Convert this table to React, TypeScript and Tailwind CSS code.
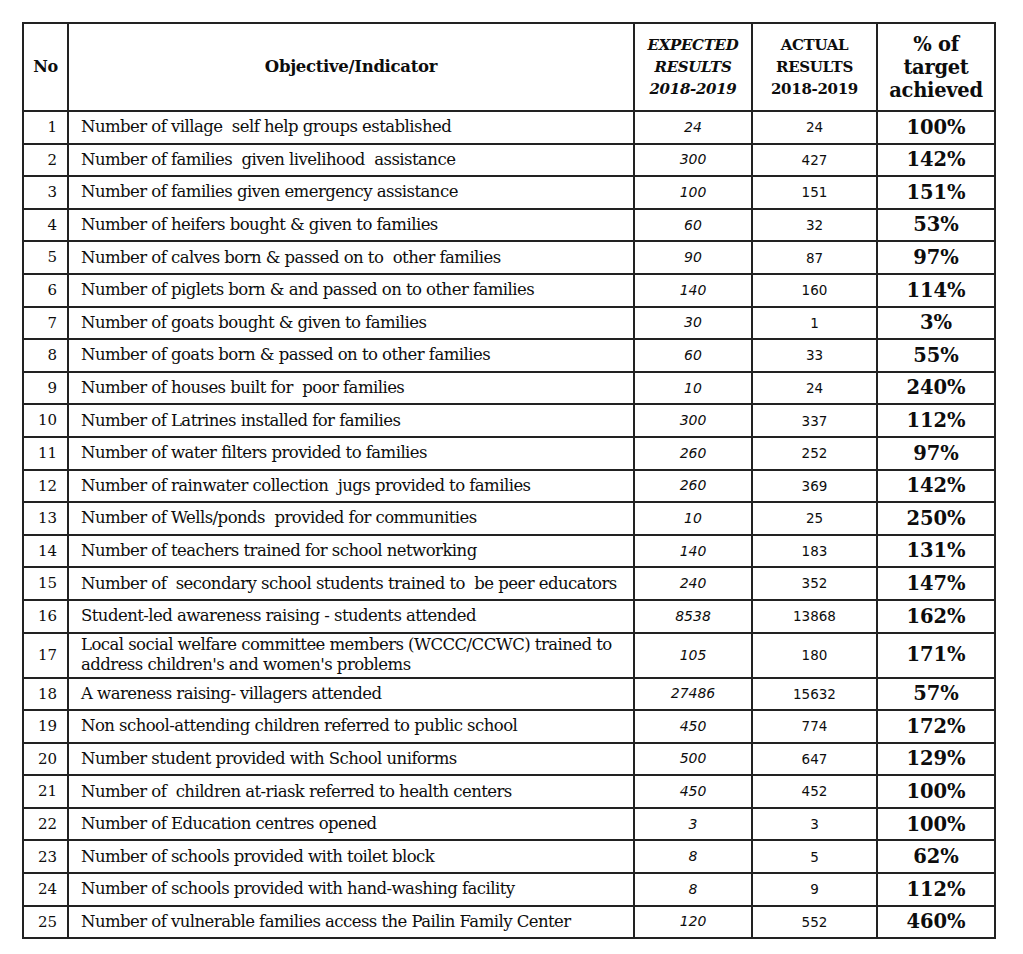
const rows: [number, string, string, string, string][] = [
  [1, 'Number of village  self help groups established', '24', '24', '100%'],
  [2, 'Number of families  given livelihood  assistance', '300', '427', '142%'],
  [3, 'Number of families given emergency assistance', '100', '151', '151%'],
  [4, 'Number of heifers bought & given to families', '60', '32', '53%'],
  [5, 'Number of calves born & passed on to  other families', '90', '87', '97%'],
  [6, 'Number of piglets born & and passed on to other families', '140', '160', '114%'],
  [7, 'Number of goats bought & given to families', '30', '1', '3%'],
  [8, 'Number of goats born & passed on to other families', '60', '33', '55%'],
  [9, 'Number of houses built for  poor families', '10', '24', '240%'],
  [10, 'Number of Latrines installed for families', '300', '337', '112%'],
  [11, 'Number of water filters provided to families', '260', '252', '97%'],
  [12, 'Number of rainwater collection  jugs provided to families', '260', '369', '142%'],
  [13, 'Number of Wells/ponds  provided for communities', '10', '25', '250%'],
  [14, 'Number of teachers trained for school networking', '140', '183', '131%'],
  [15, 'Number of  secondary school students trained to  be peer educators', '240', '352', '147%'],
  [16, 'Student-led awareness raising - students attended', '8538', '13868', '162%'],
  [17, '', '105', '180', '171%'],
  [18, 'A wareness raising- villagers attended', '27486', '15632', '57%'],
  [19, 'Non school-attending children referred to public school', '450', '774', '172%'],
  [20, 'Number student provided with School uniforms', '500', '647', '129%'],
  [21, 'Number of  children at-riask referred to health centers', '450', '452', '100%'],
  [22, 'Number of Education centres opened', '3', '3', '100%'],
  [23, 'Number of schools provided with toilet block', '8', '5', '62%'],
  [24, 'Number of schools provided with hand-washing facility', '8', '9', '112%'],
  [25, 'Number of vulnerable families access the Pailin Family Center', '120', '552', '460%'],
]

const serif = "font-['DejaVu_Serif','Liberation_Serif',serif]"
const sans = "font-['DejaVu_Sans','Liberation_Sans',sans-serif]"

export default function App() {
  return (
    <div className="min-h-[954px] w-[1023px] bg-white pl-[22px] pt-[22px] text-[#0d0d0d]">
      <table className="w-[972px] table-fixed border-collapse border-2 border-[#222]">
        <colgroup>
          <col className="w-[45px]" />
          <col className="w-[566px]" />
          <col className="w-[118px]" />
          <col className="w-[125px]" />
          <col className="w-[118px]" />
        </colgroup>
        <thead>
          <tr className={`h-[88px] ${serif} font-bold`}>
            <th className="border-2 border-[#222] text-center text-[16px] tracking-[-0.3px]">No</th>
            <th className="border-2 border-[#222] text-center text-[16.5px] tracking-[-0.3px]">Objective/Indicator</th>
            <th className="border-2 border-[#222] text-center text-[15px] italic leading-[22px] tracking-[-0.3px]">
              EXPECTED<br />RESULTS<br />2018-2019
            </th>
            <th className="border-2 border-[#222] text-center text-[15px] leading-[22px] tracking-[-0.3px]">
              ACTUAL<br />RESULTS<br />2018-2019
            </th>
            <th className="border-2 border-[#222] text-center text-[19.5px] leading-[23px] tracking-[-0.3px]">
              % of<br />target<br />achieved
            </th>
          </tr>
        </thead>
        <tbody>
          {rows.map(([no, label, expected, actual, pct]) => (
            <tr key={no} className={no === 17 ? 'h-[45px]' : 'h-[32.6px]'}>
              <td className={`border-2 border-[#222] pr-[10px] text-right text-[15px] ${serif}`}>{no}</td>
              <td className={`border-2 border-[#222] pl-[12px] text-[16.5px] leading-[20px] tracking-[-0.55px] ${serif}`}>
                {no === 17 ? (
                  <>
                    Local  social  welfare committee  members  (WCCC/CCWC) trained to
                    <br />
                    address children's and women's problems
                  </>
                ) : (
                  <span className="whitespace-pre">{label}</span>
                )}
              </td>
              <td className={`border-2 border-[#222] text-center text-[14px] italic ${sans}`}>{expected}</td>
              <td className={`border-2 border-[#222] text-center text-[13.5px] ${sans}`}>{actual}</td>
              <td className={`border-2 border-[#222] text-center text-[19.5px] font-bold ${serif}`}>{pct}</td>
            </tr>
          ))}
        </tbody>
      </table>
    </div>
  )
}
